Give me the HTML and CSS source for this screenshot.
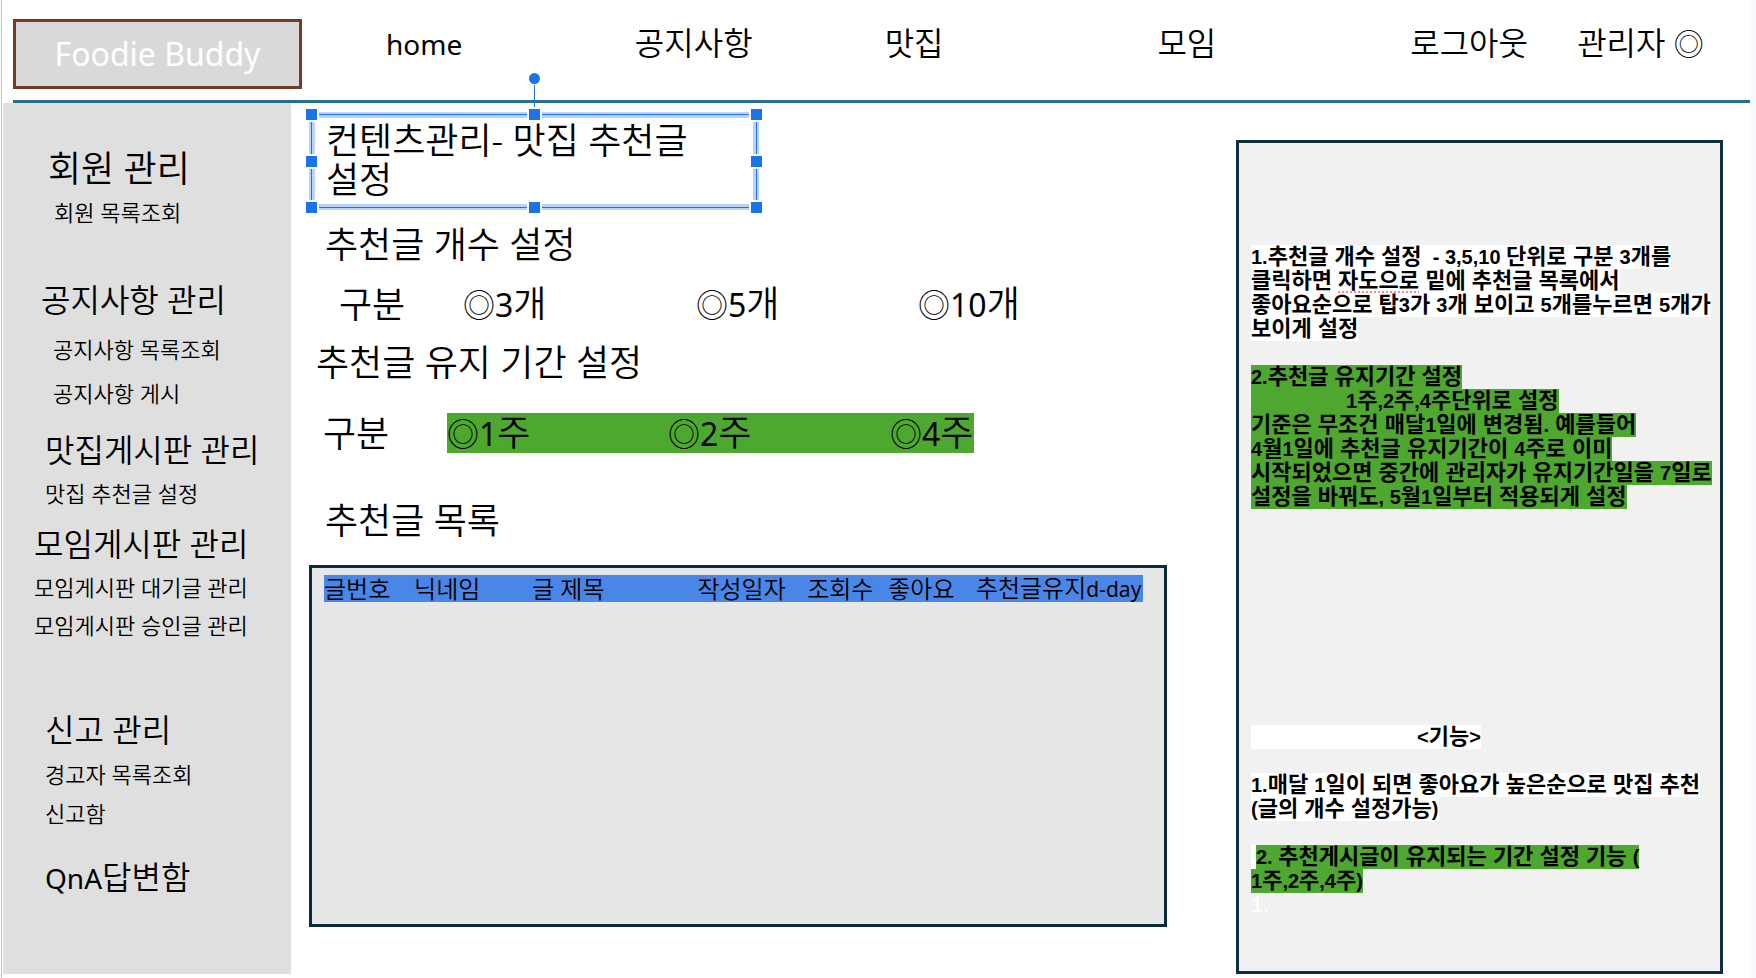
FILE: index.html
```html
<!DOCTYPE html>
<html lang="ko">
<head>
<meta charset="utf-8">
<title>Foodie Buddy</title>
<link rel="stylesheet" href="styles.css">
</head>
<body>
<div class="slide">
  <header class="topbar">
    <a class="logo" href="#">Foodie Buddy</a>
    <nav class="nav">
      <a href="#"><span class="latin">home</span></a>
      <a href="#">공지사항</a>
      <a href="#">맛집</a>
      <a href="#">모임</a>
      <a href="#">로그아웃</a>
      <a href="#">관리자 <span class="ring">◎</span></a>
    </nav>
  </header>
  <div class="content">
    <aside class="sidebar">
      <section class="group members">
        <h2>회원 관리</h2>
        <a href="#">회원 목록조회</a>
      </section>
      <section class="group notices">
        <h2>공지사항 관리</h2>
        <a href="#">공지사항 목록조회</a>
        <a href="#">공지사항 게시</a>
      </section>
      <section class="group places">
        <h2>맛집게시판 관리</h2>
        <a href="#">맛집 추천글 설정</a>
      </section>
      <section class="group meetings">
        <h2>모임게시판 관리</h2>
        <a href="#">모임게시판 대기글 관리</a>
        <a href="#">모임게시판 승인글 관리</a>
      </section>
      <section class="group reports">
        <h2>신고 관리</h2>
        <a href="#">경고자 목록조회</a>
        <a href="#">신고함</a>
      </section>
      <section class="group qna">
        <h2><span class="latin">QnA</span>답변함</h2>
      </section>
    </aside>

    <main class="main">
      <div class="selection">
        <h1>컨텐츠관리- 맛집 추천글 설정</h1>
        <i class="stem"></i><i class="knob"></i>
        <i class="handle top left"></i><i class="handle top center"></i><i class="handle top right"></i>
        <i class="handle middle left"></i><i class="handle middle right"></i>
        <i class="handle bottom left"></i><i class="handle bottom center"></i><i class="handle bottom right"></i>
      </div>
      <h2 class="heading count-heading">추천글 개수 설정</h2>
      <div class="choice count" role="radiogroup" aria-label="추천글 개수">
        <span class="choice-name">구분</span>
        <div class="options">
          <label><input type="radio" name="count"><span class="ring">◎</span><span class="latin">3</span>개</label>
          <label><input type="radio" name="count"><span class="ring">◎</span><span class="latin">5</span>개</label>
          <label><input type="radio" name="count"><span class="ring">◎</span><span class="latin">10</span>개</label>
        </div>
      </div>
      <h2 class="heading period-heading">추천글 유지 기간 설정</h2>
      <div class="choice period" role="radiogroup" aria-label="추천글 유지 기간">
        <span class="choice-name">구분</span>
        <div class="options marked">
          <label><input type="radio" name="period"><span class="ring">◎</span><span class="latin">1</span>주</label>
          <label><input type="radio" name="period"><span class="ring">◎</span><span class="latin">2</span>주</label>
          <label><input type="radio" name="period"><span class="ring">◎</span><span class="latin">4</span>주</label>
        </div>
      </div>
      <h2 class="heading list-heading">추천글 목록</h2>
      <div class="list">
        <table>
          <colgroup><col class="c-no"><col class="c-nick"><col class="c-title"><col class="c-date"><col class="c-views"><col class="c-likes"><col class="c-dday"></colgroup>
          <thead>
            <tr><th>글번호</th><th>닉네임</th><th>글 제목</th><th>작성일자</th><th>조회수</th><th>좋아요</th><th>추천글유지<span class="latin">d-day</span></th></tr>
          </thead>
        </table>
      </div>
    </main>

    <aside class="notes">
      <p>
        <span class="line white"><b>1.</b>추천글 개수 설정<b>  - 3,5,10 </b>단위로 구분 <b>3</b>개를</span>
        <span class="line white">클릭하면 <u>자도으로</u> 밑에 추천글 목록에서</span>
        <span class="line white">좋아요순으로 탑<b>3</b>가 <b>3</b>개 보이고 <b>5</b>개를누르면 <b>5</b>개가</span>
        <span class="line white">보이게 설정</span>
      </p>
      <p>
        <span class="line green"><b>2.</b>추천글 유지기간 설정</span>
        <span class="line green indent"><b>1</b>주<b>,2</b>주<b>,4</b>주단위로 설정</span>
        <span class="line green">기준은 무조건 매달<b>1</b>일에 변경됨<b>.</b> 예를들어</span>
        <span class="line green"><b>4</b>월<b>1</b>일에 추천글 유지기간이 <b>4</b>주로 이미</span>
        <span class="line green">시작되었으면 중간에 관리자가 유지기간일을 <b>7</b>일로</span>
        <span class="line green">설정을 바꿔도<b>, 5</b>월<b>1</b>일부터 적용되게 설정</span>
      </p>
      <p class="features">
        <span class="line white title"><b>&lt;</b>기능<b>&gt;</b></span>
      </p>
      <p>
        <span class="line white"><b>1.</b>매달 <b>1</b>일이 되면 좋아요가 높은순으로 맛집 추천</span>
        <span class="line white"><b>(</b>글의 개수 설정가능<b>)</b></span>
      </p>
      <p>
        <span class="line white lead"><span class="line green"><b>2. </b>추천게시글이 유지되는 기간 설정 기능 <b>(</b></span></span>
        <span class="line green"><b>1</b>주<b>,2</b>주<b>,4</b>주<b>)</b></span>
        <span class="line faint">1.</span>
      </p>
    </aside>
  </div>
</div>
</body>
</html>
```
FILE: styles.css
```css
* { box-sizing: border-box; }

body {
  margin: 0;
  background: #f8fafd;
  color: #000;
  font-family: "Noto Sans", "Noto Sans CJK KR", sans-serif;
  font-weight: 350;
}

a { color: inherit; text-decoration: none; }
h1, h2 { margin: 0; font-weight: inherit; }
p { margin: 0; }
.latin { font-weight: 400; }
.ring { font-weight: 300; }

.slide {
  display: flex;
  flex-direction: column;
  min-height: 100vh;
  margin: 0 6px 0 1px;
  padding: 0 0 4px 1px;
  border-left: 1px solid #c4c4c4;
  background: #fff;
}

/* top bar */
.topbar {
  display: flex;
  align-items: flex-start;
  margin-left: 10px;
  padding: 19px 0 11px;
  border-bottom: 3px solid #2b6d8c;
}
.logo {
  flex: none;
  width: 289px;
  border: 3px solid #713d24;
  background: #d9d9d9;
  color: #fff;
  font-size: 32px;
  font-weight: 400;
  line-height: 64px;
  text-align: center;
}
.nav {
  flex: 1;
  display: grid;
  grid-template-columns: 249fr 250fr 273fr 253fr 167fr 173fr;
  padding-left: 84px;
  font-size: 32px;
  line-height: 48px;
  white-space: nowrap;
}
.nav .latin { font-size: 28px; }
.nav .ring { font-size: 30px; }

.content {
  flex: 1;
  display: grid;
  grid-template-columns: 288px 1fr 487px;
  padding-right: 27px;
}

/* sidebar */
.sidebar {
  padding: 46px 0 40px;
  background: #dfdfdf;
  white-space: nowrap;
}
.group {
  display: flex;
  flex-direction: column;
  gap: 8px;
  padding-left: 42px;
}
.group h2 { font-size: 32px; line-height: 40px; }
.group h2 .latin { font-size: 28px; }
.group a { font-size: 22px; line-height: 30px; }
.members { padding-left: 45px; }
.members h2 { font-size: 36px; }
.members a { padding-left: 6px; }
.notices { gap: 14px; margin-top: 53px; padding-left: 38px; }
.notices a { padding-left: 12px; }
.places { margin-top: 22px; }
.meetings { margin-top: 16px; padding-left: 31px; }
.reports { gap: 9px; margin-top: 70px; }
.qna { margin-top: 29px; }

/* main column */
.main {
  display: flex;
  flex-direction: column;
  padding: 11px 69px 47px 18px;
  font-size: 36px;
}
.main .latin,
.main .ring { font-size: 32px; }

.selection {
  position: relative;
  width: 446px;
  margin-left: 2px;
  padding: 6px 15px 8px 14px;
  border: 1px solid #1a73e8;
  box-shadow: 0 0 0 2px #bcd3f9, inset 0 0 0 3px #bcd3f9;
}
.selection h1 { font-size: 36px; line-height: 39px; word-break: keep-all; }
.handle, .knob, .stem { position: absolute; background: #1a73e8; }
.handle { width: 11px; height: 11px; box-shadow: 0 0 0 2px #fff; }
.top { top: -6px; }
.middle { top: calc(50% - 5px); }
.bottom { bottom: -6px; }
.left { left: -6px; }
.center { left: calc(50% - 5px); }
.right { right: -6px; }
.knob { top: -42px; left: calc(50% - 5px); width: 11px; height: 11px; border-radius: 50%; }
.stem { top: -30px; left: 50%; width: 1px; height: 22px; }

.heading { font-size: 36px; line-height: 48px; }
.count-heading { margin: 13px 0 0 16px; }
.period-heading { margin: 10px 0 0 7px; }
.list-heading { margin: 39px 0 0 16px; }

.choice {
  display: grid;
  grid-template-columns: 124px auto;
  justify-content: start;
  align-items: center;
  line-height: 48px;
}
.options { display: grid; grid-template-columns: 233px 222px auto; }
.options label { position: relative; white-space: nowrap; }
.options input {
  position: absolute;
  top: 25%;
  left: 0;
  width: 32px;
  height: 50%;
  margin: 0;
  appearance: none;
}
.count { margin-top: 11px; padding-left: 30px; }
.period { margin-top: 22px; padding: 4px 0 5px 14px; line-height: 39px; }
.marked { grid-template-columns: 221px 222px 84px; background: #4ea72e; }

.list {
  flex: 1;
  margin-top: 20px;
  padding: 7px 21px 40px 12px;
  border: 3px solid #0b2c3b;
  background: #e7e7e7;
}
.list table {
  width: 100%;
  table-layout: fixed;
  border-collapse: collapse;
  background: #4a86e8;
}
.list th {
  padding: 0;
  font-size: 24px;
  font-weight: inherit;
  line-height: 26px;
  text-align: left;
  white-space: nowrap;
}
.list .latin { font-size: 21px; }
.c-no { width: 11%; }
.c-nick { width: 14.4%; }
.c-title { width: 20.2%; }
.c-date { width: 13.4%; }
.c-views { width: 9.9%; }
.c-likes { width: 10.7%; }
.c-dday { width: 20.4%; }

/* notes panel */
.notes {
  margin-top: 37px;
  padding: 102px 12px 48px;
  border: 3px solid #0f2f3c;
  background: #f1f1f1;
  font-family: "Liberation Sans", "Noto Sans CJK KR", sans-serif;
  font-size: 22px;
  font-weight: 700;
  line-height: 24px;
}
.notes p + p { margin-top: 24px; }
.notes p.features { margin-top: 216px; }
.notes b { font-size: 20px; font-weight: inherit; }
.line { display: block; width: fit-content; height: 24px; white-space: pre; }
.white { background: #fff; }
.green { background: #4ea72e; }
.indent { padding-left: 95px; }
.title { padding-left: 166px; }
.lead { padding-left: 5px; }
.faint { color: #fff; font-weight: 400; }
.notes u {
  text-decoration: underline dotted #f08a8a 2px;
  text-underline-offset: 3px;
}
```
